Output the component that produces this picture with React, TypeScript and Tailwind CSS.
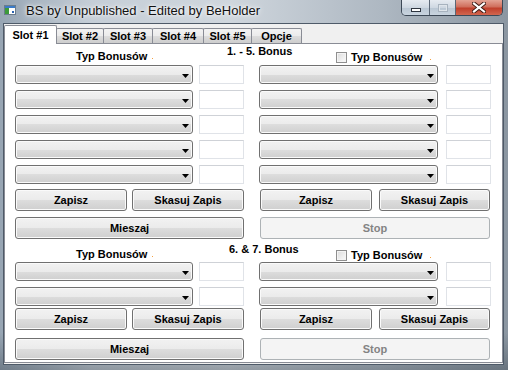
import type { ReactNode } from 'react'

const btnBg =
  'bg-[linear-gradient(180deg,#f2f2f2_0%,#ebebeb_50%,#dddddd_50%,#cfcfcf_100%)] shadow-[inset_0_0_0_1px_#fafafa]'

function Combo({ w, className = '' }: { w: string; className?: string }) {
  return (
    <div
      className={`${w} ${className} h-[19px] rounded-[3px] border border-[#707070] ${btnBg} flex items-center justify-end pr-[3px]`}
    >
      <svg width="7" height="4" viewBox="0 0 7 4" className="mt-[2px]">
        <path d="M0 0h7L3.5 4z" fill="#000" />
      </svg>
    </div>
  )
}

function Field({ className = '' }: { className?: string }) {
  return (
    <div
      className={`${className} w-[45px] h-[19px] border border-[#e0e3e8] border-t-[#cfd2d7] bg-white`}
    />
  )
}

function Btn({
  w,
  className = '',
  disabled = false,
  children,
}: {
  w: string
  className?: string
  disabled?: boolean
  children: ReactNode
}) {
  if (disabled) {
    return (
      <div
        className={`${w} ${className} h-[22px] rounded-[3px] border border-[#adb2b5] bg-[#f4f4f4] flex items-center justify-center text-[#838383]`}
      >
        {children}
      </div>
    )
  }
  return (
    <div
      className={`${w} ${className} h-[22px] rounded-[3px] border border-[#707070] ${btnBg} flex items-center justify-center text-black`}
    >
      {children}
    </div>
  )
}

function Check() {
  return (
    <div className="w-[11px] h-[11px] border border-[#8f8f8f] bg-[linear-gradient(135deg,#dcdcdc,#fbfbfb)] shadow-[inset_0_0_0_1px_#f4f4f4]" />
  )
}

function Row({ className = '' }: { className?: string }) {
  return (
    <div className={`${className} flex h-[19px]`}>
      <Combo w="w-[178px]" />
      <Field className="ml-[6px]" />
      <Combo w="w-[179px]" className="ml-[15px]" />
      <Field className="ml-[8px]" />
    </div>
  )
}

function Header({ title, titleTop, className = '' }: { title: string; titleTop: string; className?: string }) {
  return (
    <div className={`${className} flex items-start`}>
      <div className="w-[212px] pl-[61px] pt-[6px] flex items-center">
        <span>Typ Bonusów</span>
        <span className="ml-[5px] mt-[4px] w-[1px] h-[1px] bg-[#f5a142]" />
      </div>
      <div className={`w-[109px] ${titleTop}`}>{title}</div>
      <div className="pt-[6px] flex items-center">
        <Check />
        <span className="ml-[4px] mt-[1px]">Typ Bonusów</span>
        <span className="ml-[8px] mt-[5px] w-[1px] h-[1px] bg-[#f5a142]" />
      </div>
    </div>
  )
}

export default function App() {
  const tabs = ['Slot #2', 'Slot #3', 'Slot #4', 'Slot #5', 'Opcje']
  const tabW = ['w-[48px]', 'w-[50px]', 'w-[52px]', 'w-[49px]', 'w-[51px]']

  return (
    <div className="w-[508px] h-[370px] overflow-hidden bg-[linear-gradient(180deg,rgba(255,255,255,0)_0%,rgba(255,255,255,0)_90%,rgba(40,50,60,0.35)_100%),linear-gradient(90deg,#97a5b3_0%,#c5ced7_18%,#cfd6dd_45%,#aeb8c2_75%,#8b96a1_100%)] font-['Liberation_Sans',Arial,sans-serif]">
      {/* Title bar */}
      <div className="h-[23px] flex items-start">
        <svg width="12" height="10" viewBox="0 0 12 10" className="ml-[4px] mt-[5px]">
          <rect x="0.5" y="0.5" width="11" height="9" fill="#fff" stroke="#6b7c8c" />
          <rect x="1" y="1" width="10" height="2" fill="#3a7bc8" />
          <rect x="1" y="3" width="4" height="6" fill="#3d9a3a" />
          <rect x="8" y="6" width="2" height="2" fill="#2a62b0" />
        </svg>
        <span className="ml-[10px] mt-[3px] text-[13px] leading-[15px] text-[#111] [text-shadow:0_0_6px_#fff,0_0_3px_#fff]">
          BS by Unpublished - Edited by BeHolder
        </span>
        <div className="ml-auto mr-[5px] flex h-[16px] rounded-b-[5px] border-x border-b border-[#3c4856] overflow-hidden">
          <div className="w-[28px] flex items-center justify-center bg-[linear-gradient(180deg,#e6ebf1_0%,#cfd8e2_50%,#b9c6d3_51%,#c9d4df_100%)] border-r border-[#5b6776]">
            <div className="mt-[5px] w-[10px] h-[4px] bg-white border border-[#2e3540]" />
          </div>
          <div className="w-[26px] flex items-center justify-center bg-[linear-gradient(180deg,#e6ebf1_0%,#cfd8e2_50%,#b9c6d3_51%,#c9d4df_100%)] border-r border-[#5b6776]">
            <div className="w-[10px] h-[8px] border border-[#a7b2be] shadow-[inset_0_0_0_1px_#dfe5eb]" />
          </div>
          <div className="w-[46px] flex items-center justify-center bg-[linear-gradient(180deg,#e3a394_0%,#d06f5d_45%,#c0402c_55%,#d2664f_100%)]">
            <svg width="14" height="11" viewBox="0 0 14 11">
              <path d="M2 1.5L12 9.5M12 1.5L2 9.5" stroke="#3a1a14" strokeWidth="4" strokeLinecap="square" />
              <path d="M2 1.5L12 9.5M12 1.5L2 9.5" stroke="#fff" strokeWidth="2.2" strokeLinecap="square" />
            </svg>
          </div>
        </div>
      </div>

      {/* Client area */}
      <div className="ml-[3px] w-[501px] h-[342px] border border-[#4e5a68] bg-[#f0f0f0] text-[11px] leading-[13px] font-bold text-black">
        {/* Tab strip */}
        <div className="h-[19px] flex items-end">
          <div className="relative z-10 -mb-px w-[53px] h-[19px] bg-white border-x border-t border-[#898c95] rounded-t-[2px] flex items-start justify-center pt-[3px]">
            Slot #1
          </div>
          {tabs.map((t, i) => (
            <div
              key={t}
              className={`${tabW[i]} h-[15px] -ml-px first:ml-0 border border-b-0 border-[#898c95] rounded-t-[2px] bg-[linear-gradient(180deg,#f3f3f3_0%,#ebebeb_50%,#dddddd_50%,#cdcdcd_100%)] flex items-center justify-center`}
            >
              {t}
            </div>
          ))}
        </div>

        {/* Tab page */}
        <div className="h-[320px] border border-[#898c95] bg-white pl-[10px]">
          <Header title="1. - 5. Bonus" titleTop="pt-[1px]" className="h-[21px]" />
          <Row />
          <Row className="mt-[6px]" />
          <Row className="mt-[6px]" />
          <Row className="mt-[6px]" />
          <Row className="mt-[6px]" />

          <div className="flex mt-[5px]">
            <Btn w="w-[112px]">Zapisz</Btn>
            <Btn w="w-[112px]" className="ml-[5px]">Skasuj Zapis</Btn>
            <Btn w="w-[112px]" className="ml-[16px]">Zapisz</Btn>
            <Btn w="w-[111px]" className="ml-[7px]">Skasuj Zapis</Btn>
          </div>
          <div className="flex mt-[6px]">
            <Btn w="w-[229px]">Mieszaj</Btn>
            <Btn w="w-[230px]" className="ml-[16px]" disabled>
              Stop
            </Btn>
          </div>

          <Header title="6. & 7. Bonus" titleTop="pt-[1px] pl-[2px]" className="h-[23px] pt-[3px]" />
          <Row />
          <Row className="mt-[6px]" />

          <div className="flex mt-[2px]">
            <Btn w="w-[112px]">Zapisz</Btn>
            <Btn w="w-[112px]" className="ml-[5px]">Skasuj Zapis</Btn>
            <Btn w="w-[112px]" className="ml-[16px]">Zapisz</Btn>
            <Btn w="w-[111px]" className="ml-[7px]">Skasuj Zapis</Btn>
          </div>
          <div className="flex mt-[8px]">
            <Btn w="w-[229px]">Mieszaj</Btn>
            <Btn w="w-[230px]" className="ml-[16px]" disabled>
              Stop
            </Btn>
          </div>
        </div>
      </div>
    </div>
  )
}
